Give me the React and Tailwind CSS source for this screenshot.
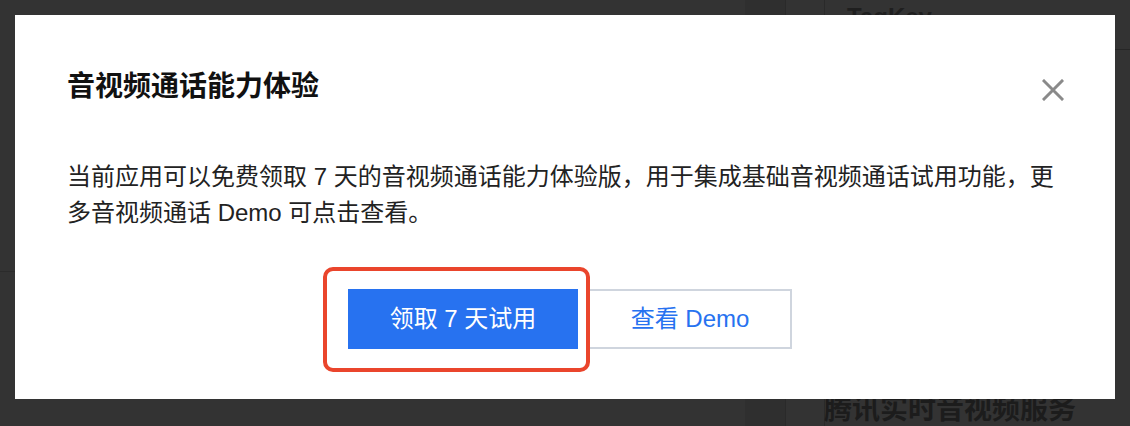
import React from "react";

const FONT = { fontFamily: '"Liberation Sans", "Noto Sans CJK SC", sans-serif' };

export default function App() {
  return (
    <div className="relative w-[1130px] h-[426px] overflow-hidden bg-[#333333]" style={FONT}>
      {/* dimmed page behind the modal */}
      <div className="flex h-full w-full">
        <div className="flex flex-col w-[745px]">
          <div className="h-[272px] border-b border-[#2b2b2b]" />
          <div className="flex-1" />
        </div>
        <div className="w-[40px] bg-[#2f2f2f]" />
        <div className="w-[40px] border-l border-r border-[#2a2a2a]" />
        <div className="flex flex-col flex-1">
          <div className="h-[50px] border-b border-[#262626] pl-[22px]">
            <div className="text-[24px] font-bold leading-[30px] mt-[2px] text-[#1f1f1f]">TagKey</div>
          </div>
          <div className="flex-1" />
          <div className="text-[28px] font-bold leading-[32px] mb-[0px] -ml-[1px] text-[#1c1c1c]">腾讯实时音视频服务</div>
        </div>
      </div>

      {/* modal */}
      <div className="absolute left-[15px] top-[15px] w-[1100px] h-[384px] bg-white px-[52px] pt-[52px]">
        <div className="text-[28px] font-bold leading-[40px] text-[#111]">音视频通话能力体验</div>
        <button className="absolute right-[51px] top-[64px] w-[22px] h-[22px] flex items-center justify-center">
          <svg width="22" height="22" viewBox="0 0 22 22" fill="none">
            <path d="M2 2 L20 20 M20 2 L2 20" stroke="#8a8a8a" strokeWidth="3" strokeLinecap="square" />
          </svg>
        </button>
        <p className="mt-[52px] text-[24px] leading-[36px] text-[#222]">
          当前应用可以免费领取 7 天的音视频通话能力体验版，用于集成基础音视频通话试用功能，更多音视频通话 Demo 可点击查看。
        </p>
        <div className="flex justify-center pl-[10px] mt-[58px] gap-[10px]">
          <div className="relative">
            <button className="w-[230px] h-[60px] bg-[#2772f0] text-white text-[24px] leading-[60px]">
              领取 7 天试用
            </button>
            <div className="absolute -left-[25px] -top-[22px] -right-[12px] -bottom-[23px] border-[4px] border-[#ea452c] rounded-[10px] pointer-events-none" />
          </div>
          <button className="w-[204px] h-[60px] bg-white border-2 border-[#cfd5de] text-[#2772f0] text-[24px]">
            查看 Demo
          </button>
        </div>
      </div>
    </div>
  );
}
